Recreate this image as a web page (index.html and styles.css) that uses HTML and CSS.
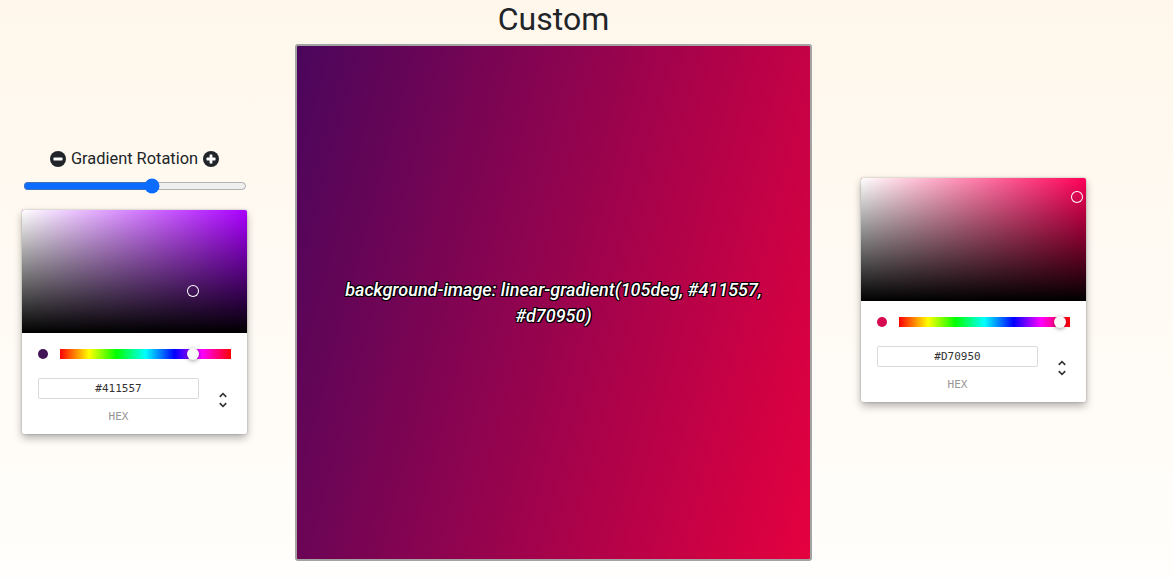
FILE: index.html
```html
<!DOCTYPE html>
<html lang="en">
<head>
<meta charset="utf-8">
<title>Custom Gradient</title>
<link rel="stylesheet" href="styles.css">
</head>
<body>
<main class="page">
  <section class="left-col">
    <div class="rotation-title">
      <svg class="round-icon" viewBox="0 0 16 16" aria-hidden="true"><circle cx="8" cy="8" r="8" fill="#212529"/><rect x="3.5" y="6.6" width="9" height="2.8" rx="0.6" fill="#fff"/></svg>
      <span>Gradient Rotation</span>
      <svg class="round-icon" viewBox="0 0 16 16" aria-hidden="true"><circle cx="8" cy="8" r="8" fill="#212529"/><rect x="3.5" y="6.6" width="9" height="2.8" rx="0.6" fill="#fff"/><rect x="6.6" y="3.5" width="2.8" height="9" rx="0.6" fill="#fff"/></svg>
    </div>
    <input class="rotation-range" type="range" min="0" max="180" value="105">
    <div class="picker">
      <div class="saturation" style="background-color: hsl(280, 100%, 50%);">
        <div class="sat-white"></div>
        <div class="sat-black"></div>
        <div class="sat-pointer" style="left: 75.9%; top: 65.9%;"></div>
      </div>
      <div class="picker-body">
        <div class="controls">
          <div class="color-cell"><div class="swatch" style="background: #411557;"></div></div>
          <div class="hue">
            <div class="hue-pointer" style="left: 77.8%;"></div>
          </div>
        </div>
        <div class="fields-wrap">
          <div class="field">
            <input class="hex-input" value="#411557" spellcheck="false">
            <span class="field-label">hex</span>
          </div>
          <div class="toggle">
            <svg class="toggle-icon" viewBox="0 0 24 24" aria-hidden="true"><path fill="#333" d="M12,18.17L8.83,15L7.41,16.41L12,21L16.59,16.41L15.17,15M12,5.83L15.17,9L16.59,7.59L12,3L7.41,7.59L8.83,9L12,5.83Z"/></svg>
          </div>
        </div>
      </div>
    </div>
  </section>

  <section class="center-col">
    <h2 class="title">Custom</h2>
    <div class="preview">
      <p class="preview-text">background-image: linear-gradient(105deg, #411557, #d70950)</p>
    </div>
  </section>

  <section class="right-col">
    <div class="picker">
      <div class="saturation" style="background-color: hsl(339.3, 100%, 50%);">
        <div class="sat-white"></div>
        <div class="sat-black"></div>
        <div class="sat-pointer" style="left: 95.8%; top: 15.7%;"></div>
      </div>
      <div class="picker-body">
        <div class="controls">
          <div class="color-cell"><div class="swatch" style="background: #d70950;"></div></div>
          <div class="hue">
            <div class="hue-pointer" style="left: 94.3%;"></div>
          </div>
        </div>
        <div class="fields-wrap">
          <div class="field">
            <input class="hex-input" value="#D70950" spellcheck="false">
            <span class="field-label">hex</span>
          </div>
          <div class="toggle">
            <svg class="toggle-icon" viewBox="0 0 24 24" aria-hidden="true"><path fill="#333" d="M12,18.17L8.83,15L7.41,16.41L12,21L16.59,16.41L15.17,15M12,5.83L15.17,9L16.59,7.59L12,3L7.41,7.59L8.83,9L12,5.83Z"/></svg>
          </div>
        </div>
      </div>
    </div>
  </section>
</main>
</body>
</html>
```

FILE: styles.css
```css
* { box-sizing: border-box; }

html, body {
  margin: 0;
  padding: 0;
}

body {
  min-height: 100vh;
  background: linear-gradient(to bottom, #fff7eb 0%, #fffefc 100%);
  font-family: Roboto, "Liberation Sans", Arial, sans-serif;
  color: #212529;
  overflow: hidden;
}

.page {
  display: flex;
  align-items: flex-start;
  padding-left: 22px;
}

/* Left column */
.left-col {
  width: 225px;
  margin-top: 147px;
  margin-right: 48px;
  display: flex;
  flex-direction: column;
}

.rotation-title {
  height: 24px;
  display: flex;
  align-items: center;
  justify-content: center;
  gap: 5px;
  font-size: 16.4px;
  line-height: 24px;
}

.round-icon {
  width: 16px;
  height: 16px;
  display: block;
}

.rotation-range {
  width: 224px;
  height: 16px;
  margin: 7px 0 0 1px;
  accent-color: #0b6cff;
}

.picker {
  width: 225px;
  margin-top: 16px;
  background: #fff;
  border-radius: 2px;
  box-shadow: 0 0 2px rgba(0, 0, 0, 0.3), 0 4px 8px rgba(0, 0, 0, 0.3);
  font-family: "DejaVu Sans Mono", Menlo, monospace;
}

.right-col {
  margin-left: 49px;
  margin-top: 162px;
}

.saturation {
  position: relative;
  height: 123px;
  border-radius: 2px 2px 0 0;
  overflow: hidden;
}

.sat-white {
  position: absolute;
  inset: 0;
  background: linear-gradient(to right, #fff, rgba(255, 255, 255, 0));
}

.sat-black {
  position: absolute;
  inset: 0;
  background: linear-gradient(to top, #000, rgba(0, 0, 0, 0));
}

.sat-pointer {
  position: absolute;
  width: 12px;
  height: 12px;
  border-radius: 6px;
  box-shadow: inset 0 0 0 1px #fff;
  transform: translate(-6px, -6px);
}

.picker-body {
  padding: 16px 16px 12px;
}

.controls {
  display: flex;
  align-items: flex-start;
}

.color-cell {
  width: 22px;
  flex: none;
}

.swatch {
  width: 10px;
  height: 10px;
  border-radius: 8px;
}

.hue {
  position: relative;
  flex: 1;
  height: 10px;
  background: linear-gradient(to right, #f00 0%, #ff0 17%, #0f0 33%, #0ff 50%, #00f 67%, #f0f 83%, #f00 100%);
}

.hue-pointer {
  position: absolute;
  top: 0;
  width: 12px;
  height: 12px;
  border-radius: 6px;
  background: rgb(248, 248, 248);
  box-shadow: 0 1px 4px 0 rgba(0, 0, 0, 0.37);
  transform: translate(-6px, -1px);
}

.fields-wrap {
  display: flex;
  padding-top: 19px;
}

.field {
  flex: 1;
  display: flex;
  flex-direction: column;
}

.hex-input {
  width: 100%;
  height: 21px;
  border: none;
  border-radius: 2px;
  box-shadow: inset 0 0 0 1px #dadada;
  font-family: "DejaVu Sans Mono", Menlo, monospace;
  font-size: 11px;
  color: #333;
  text-align: center;
  padding: 0;
  outline: none;
  background: #fff;
}

.field-label {
  display: block;
  margin-top: 12px;
  font-size: 11px;
  line-height: 11px;
  color: #969696;
  text-align: center;
  text-transform: uppercase;
}

.toggle {
  width: 32px;
  flex: none;
  display: flex;
  justify-content: flex-end;
}

.toggle-icon {
  width: 20px;
  height: 20px;
  margin-top: 12px;
  margin-right: -2px;
  display: block;
}

/* Center column */
.center-col {
  width: 517px;
  display: flex;
  flex-direction: column;
  align-items: center;
}

.title {
  margin: 0 0 6px;
  font-size: 32px;
  line-height: 38px;
  font-weight: 400;
  color: #212529;
}

.preview {
  width: 517px;
  height: 517px;
  border: 2px solid #a3a3a3;
  border-radius: 3px;
  background-image: linear-gradient(105deg, #4a065c, #e5003f);
  display: flex;
  align-items: center;
  justify-content: center;
  padding: 0 30px;
}

.preview-text {
  margin: 0;
  text-align: center;
  color: #fff;
  font-family: Roboto, "Liberation Sans", sans-serif;
  font-style: italic;
  font-weight: 500;
  font-size: 18px;
  line-height: 26px;
  text-shadow: -1px -1px 0 #000, 1px -1px 0 #000, -1px 1px 0 #000, 1px 1px 0 #000, 0 0 2px #000;
}
```
